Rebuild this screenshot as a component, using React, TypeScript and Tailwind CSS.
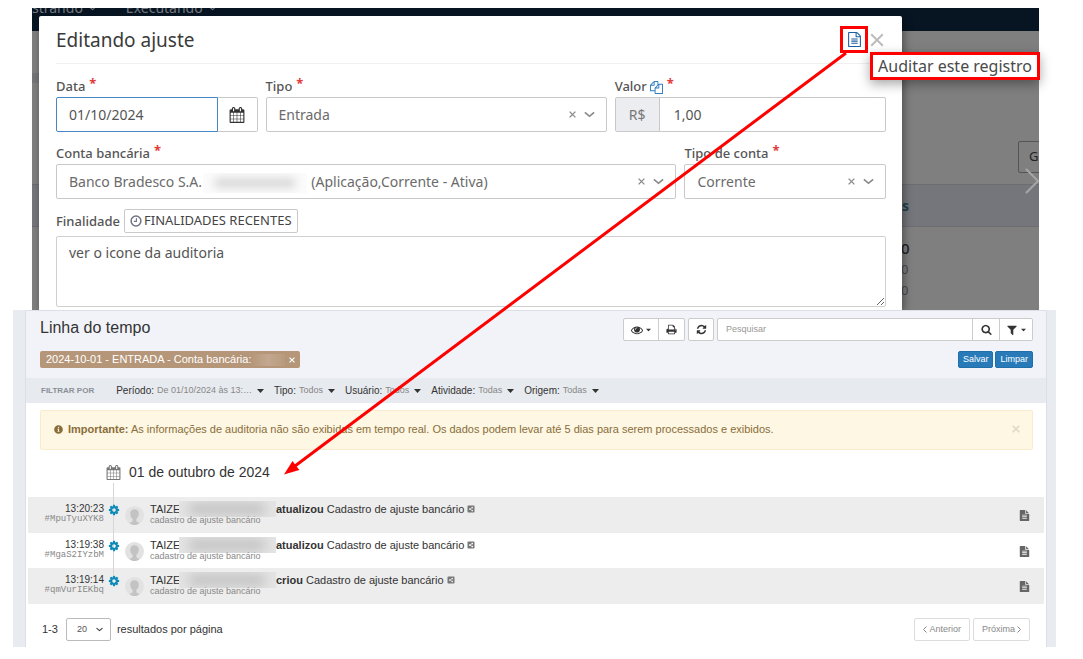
import React from "react";
import { FaInfoCircle, FaShareAltSquare } from "react-icons/fa";

const SANS = "font-['Liberation_Sans',Arial,sans-serif]";
const NOTO = "font-['Noto_Sans',sans-serif]";

const PATHS = {
  calendar:
    "M192 1664h288v-288h-288v288zm352 0h320v-288h-320v288zm-352-352h288v-320h-288v320zm352 0h320v-320h-320v320zm-352-384h288v-288h-288v288zm736 736h320v-288h-320v288zm-384-736h320v-288h-320v288zm768 736h288v-288h-288v288zm-384-352h320v-320h-320v320zm-352-864v-288q0-13-9.500-22.500t-22.500-9.500h-64q-13 0-22.500 9.500t-9.500 22.500v288q0 13 9.500 22.500t22.500 9.500h64q13 0 22.500-9.500t9.500-22.500zm736 864h288v-320h-288v320zm-384-384h320v-288h-320v288zm384 0h288v-288h-288v288zm32-480v-288q0-13-9.500-22.500t-22.500-9.500h-64q-13 0-22.500 9.500t-9.500 22.500v288q0 13 9.500 22.500t22.500 9.500h64q13 0 22.500-9.500t9.500-22.500zm384-64v1280q0 52-38 90t-90 38h-1408q-52 0-90-38t-38-90v-1280q0-52 38-90t90-38h128v-96q0-66 47-113t113-47h64q66 0 113 47t47 113v96h384v-96q0-66 47-113t113-47h64q66 0 113 47t47 113v96h128q52 0 90 38t38 90z",
  fileOutline:
    "M1596 380q28 28 48 76t20 88v1152q0 40-28 68t-68 28h-1344q-40 0-68-28t-28-68v-1600q0-40 28-68t68-28h896q40 0 88 20t76 48zm-444-244v376h376q-10-29-22-41l-313-313q-12-12-41-22zm384 1528v-1024h-416q-40 0-68-28t-28-68v-416h-768v1536h1280zm-1024-864q0-14 9-23t23-9h704q14 0 23 9t9 23v64q0 14-9 23t-23 9h-704q-14 0-23-9t-9-23v-64zm736 224q14 0 23 9t9 23v64q0 14-9 23t-23 9h-704q-14 0-23-9t-9-23v-64q0-14 9-23t23-9h704zm0 256q14 0 23 9t9 23v64q0 14-9 23t-23 9h-704q-14 0-23-9t-9-23v-64q0-14 9-23t23-9h704z",
  file: "M1596 476q14 14 28 36h-472v-472q22 14 36 28zm-476 164h544v1056q0 40-28 68t-68 28h-1344q-40 0-68-28t-28-68v-1600q0-40 28-68t68-28h800v544q0 40 28 68t68 28zm160 736v-64q0-14-9-23t-23-9h-704q-14 0-23 9t-9 23v64q0 14 9 23t23 9h704q14 0 23-9t9-23zm0-256v-64q0-14-9-23t-23-9h-704q-14 0-23 9t-9 23v64q0 14 9 23t23 9h704q14 0 23-9t9-23zm0-256v-64q0-14-9-23t-23-9h-704q-14 0-23 9t-9 23v64q0 14 9 23t23 9h704q14 0 23-9t9-23z",
  search:
    "M1216 832q0-185-131.500-316.500t-316.500-131.500-316.500 131.500-131.500 316.500 131.500 316.500 316.500 131.500 316.500-131.500 131.500-316.500zm512 832q0 52-38 90t-90 38q-54 0-90-38l-343-342q-179 124-399 124-143 0-273.500-55.500t-225-150-150-225-55.500-273.500 55.500-273.500 150-225 225-150 273.500-55.500 273.500 55.500 225 150 150 225 55.500 273.500q0 220-124 399l343 343q37 37 37 90z",
  refresh:
    "M1639 1056q0 5-1 7-64 268-268 434.500t-478 166.500q-146 0-282.500-55t-243.500-157l-129 129q-19 19-45 19t-45-19-19-45v-448q0-26 19-45t45-19h448q26 0 45 19t19 45-19 45l-137 137q71 66 161 102t187 36q134 0 250-65t186-179q11-17 53-117 8-23 30-23h192q13 0 22.500 9.500t9.500 22.500zm25-800v448q0 26-19 45t-45 19h-448q-26 0-45-19t-19-45 19-45l138-138q-148-137-349-137-134 0-250 65t-186 179q-11 17-53 117-8 23-30 23h-199q-13 0-22.500-9.500t-9.500-22.500v-7q65-268 270-434.500t480-166.500q146 0 284 55.500t245 156.500l130-129q19-19 45-19t45 19 19 45z",
  print:
    "M448 1536h896v-256h-896v256zm0-640h896v-384h-160q-40 0-68-28t-28-68v-160h-640v640zm1152 64q0-26-19-45t-45-19-45 19-19 45 19 45 45 19 45-19 19-45zm128 0v416q0 13-9.500 22.500t-22.500 9.500h-224v160q0 40-28 68t-68 28h-960q-40 0-68-28t-28-68v-160h-224q-13 0-22.500-9.500t-9.500-22.500v-416q0-79 56.500-135.500t135.500-56.500h64v-544q0-40 28-68t68-28h672q40 0 88 20t76 48l152 152q28 28 48 76t20 88v256h64q79 0 135.500 56.500t56.500 135.500z",
  filter:
    "M1595 295q17 41-14 70l-493 493v742q0 42-39 59-13 5-25 5-27 0-45-19l-256-256q-19-19-19-45v-486l-493-493q-31-29-14-70 17-39 59-39h1280q42 0 59 39z",
  eye: "M1664 960q-152-236-381-353 61 104 61 225 0 185-131.500 316.500t-316.500 131.500-316.500-131.500-131.500-316.500q0-121 61-225-229 117-381 353 133 205 333.500 326.500t434.500 121.500 434.500-121.500 333.500-326.500zm-720-384q0-20-14-34t-34-14q-125 0-214.500 89.500t-89.500 214.500q0 20 14 34t34 14 34-14 14-34q0-86 61-147t147-61q20 0 34-14t14-34zm848 384q0 34-20 69-140 230-376.500 368.500t-499.500 138.500-499.500-139-376.500-368q-20-35-20-69t20-69q140-229 376.500-368t499.500-139 499.500 139 376.500 368q20 35 20 69z",
  copy: "M1696 384q40 0 68 28t28 68v1216q0 40-28 68t-68 28h-960q-40 0-68-28t-28-68v-288h-544q-40 0-68-28t-28-68v-672q0-40 20-88t48-76l408-408q28-28 76-48t88-20h416q40 0 68 28t28 68v328q68-40 128-40h416zm-544 213l-299 299h299v-299zm-640-384l-299 299h299v-299zm196 647l316-316v-416h-384v416q0 40-28 68t-68 28h-416v640h512v-256q0-40 20-88t48-76zm956 804v-1152h-384v416q0 40-28 68t-68 28h-416v640h896z",
  cog: "M1152 896q0-106-75-181t-181-75-181 75-75 181 75 181 181 75 181-75 75-181zm512-109v222q0 12-8 23t-20 13l-185 28q-19 54-39 91 35 50 107 138 10 12 10 25t-9 23q-27 37-99 108t-94 71q-12 0-26-9l-138-108q-44 23-91 38-16 136-29 186-7 28-36 28h-222q-14 0-24.500-8.500t-11.500-21.500l-28-184q-49-16-90-37l-141 107q-10 9-25 9-14 0-25-11-126-114-165-168-7-10-7-23 0-12 8-23 15-21 51-66.500t54-70.500q-27-50-41-99l-183-27q-13-2-21-12.500t-8-23.500v-222q0-12 8-23t19-13l186-28q14-46 39-92-40-57-107-138-10-12-10-24 0-10 9-23 26-36 98.500-107.500t94.500-71.500q13 0 26 10l138 107q44-23 91-38 16-136 29-186 7-28 36-28h222q14 0 24.500 8.500t11.500 21.500l28 184q49 16 90 37l142-107q9-9 24-9 13 0 25 10 129 119 165 170 7 8 7 22 0 12-8 23-15 21-51 66.500t-54 70.500q26 50 41 98l183 28q13 2 21 12.500t8 23.500z",
};

function Icon({ name, className }: { name: keyof typeof PATHS; className: string }) {
  return (
    <svg viewBox="0 0 1792 1792" className={`shrink-0 fill-current ${className}`} aria-hidden="true">
      <path d={PATHS[name]} />
    </svg>
  );
}

function Clock({ className }: { className: string }) {
  return (
    <svg viewBox="0 0 12 12" className={className} fill="none" stroke="currentColor" aria-hidden="true">
      <circle cx="6" cy="6" r="4.900" strokeWidth="1.500" />
      <path d="M6.400 3v3.400H3.900" strokeWidth="1.100" />
    </svg>
  );
}

function Chevron({ className }: { className: string }) {
  return (
    <svg viewBox="0 0 10 6" className={className} fill="none" stroke="currentColor" aria-hidden="true">
      <path d="M.8 1L5 4.600 9.200 1" strokeWidth="1.500" />
    </svg>
  );
}

function Cross({ className, weight = 1.5 }: { className: string; weight?: number }) {
  return (
    <svg viewBox="0 0 8 8" className={className} fill="none" stroke="currentColor" aria-hidden="true">
      <path d="M.7.7l6.600 6.600M7.300.7L.7 7.300" strokeWidth={weight} />
    </svg>
  );
}

function Caret() {
  return (
    <svg viewBox="0 0 7 4" className="h-1 w-[7px] shrink-0 fill-current" aria-hidden="true">
      <path d="M0 0h7L3.500 4z" />
    </svg>
  );
}

function FieldLabel({ id, children }: { id: string; children: React.ReactNode }) {
  return (
    <label htmlFor={id} className="flex h-5 items-center gap-1 text-[13px] font-medium text-[#555]">
      {children}
      <span className="mb-2 text-[13px] font-bold leading-none text-[#e23b3b]">*</span>
    </label>
  );
}

function SelectBox({ id, value, children }: { id: string; value: string; children?: React.ReactNode }) {
  return (
    <div className="relative flex h-[35px] items-center rounded-xs border border-[#c9c9c9] bg-white pl-3 pr-[11px] text-[#6b6b6b]">
      <select id={id} className="h-full min-w-0 flex-1 appearance-none bg-transparent text-sm outline-none">
        <option>{value}</option>
      </select>
      {children}
      <button type="button" aria-label="Limpar campo" className="mr-2 text-[#888]">
        <Cross className="h-[7px] w-[7px]" />
      </button>
      <Chevron className="h-[7px] w-[11px] text-[#888]" />
    </div>
  );
}

function Backdrop() {
  return (
    <div className="absolute inset-0 overflow-hidden bg-[#7f7f7f]">
      <div className="h-[23px] overflow-hidden bg-[#071523]">
        <div className="-mt-2 flex gap-[30px] text-sm leading-4 text-[#777b80]">
          <span className="flex items-center gap-1.5">strando <Chevron className="h-[5px] w-[7px]" /></span>
          <span className="flex items-center gap-1.5">Executando <Chevron className="h-[5px] w-[7px]" /></span>
        </div>
      </div>
      <div className="mt-[42px] h-2.5 w-2 bg-[#747578]" />
      <div className="mt-[58px] flex justify-end">
        <div className="-mr-1 h-8 w-[25px] rounded-xs border border-[#555] pl-2.5 text-[13px] leading-[28px] text-[#222]">G</div>
      </div>
      <div className="mt-[11px] flex h-[43px] items-center border-y border-[#6d6d70] bg-[#75767b]">
        <div className="ml-auto w-[137px] text-sm font-bold text-[#23414f]">s</div>
      </div>
      <div className="ml-auto w-[138px] pt-2.5 text-[15px] leading-[22px] text-[#222]">
        <div className="font-medium">0</div>
        <div className="text-[13px] leading-[21px] text-[#4a4a4a]">0</div>
        <div className="text-[13px] leading-[21px] text-[#4a4a4a]">0</div>
      </div>
      <svg viewBox="0 0 14 26" className="absolute right-0 top-40 h-[26px] w-3.5" fill="none" stroke="#a5a5a5" strokeWidth="2.200" aria-hidden="true">
        <path d="M1 1l12 12L1 25" />
      </svg>
    </div>
  );
}

function EditModal() {
  return (
    <section className={`relative ml-8 mr-11 ${NOTO}`}>
      <Backdrop />
      <div className="relative flow-root">
        <form className="ml-[7px] mr-[137px] mt-2 rounded-t-xs bg-white pb-[3px] pl-[17px] pr-4 shadow-[2px_2px_8px_rgba(0,0,0,0.4)]">
          <header className="flex h-12 items-center border-b border-[#f0f0f0] pr-0.5">
            <h1 className="text-[19px] leading-6 text-[#3a3a3a]">Editando ajuste</h1>
            <button type="button" aria-label="Auditar este registro" className="ml-auto flex h-[27px] w-7 items-center justify-center border-3 border-[#fe0000] text-[#1f5f9f]">
              <Icon name="fileOutline" className="h-[15px] w-[15px]" />
            </button>
            <button type="button" aria-label="Fechar" className="ml-0.5 text-[#bbb]">
              <Cross className="h-3.5 w-3.5" weight={1.1} />
            </button>
          </header>
          <div className="mt-[13px] grid grid-cols-12 gap-x-2 gap-y-3">
            <div className="col-span-3">
              <FieldLabel id="data">Data</FieldLabel>
              <div className="flex h-[35px]">
                <input id="data" defaultValue="01/10/2024" className="w-0 min-w-0 flex-1 rounded-l-xs border border-[#4a86c5] px-3 text-sm text-[#555] outline-none" />
                <button type="button" aria-label="Abrir calendário" className="flex w-10 items-center justify-center rounded-r-xs border border-l-0 border-[#c9c9c9] text-[#333]">
                  <Icon name="calendar" className="h-4 w-4" />
                </button>
              </div>
            </div>
            <div className="col-span-5">
              <FieldLabel id="tipo">Tipo</FieldLabel>
              <SelectBox id="tipo" value="Entrada" />
            </div>
            <div className="col-span-4">
              <FieldLabel id="valor">
                Valor <Icon name="copy" className="-ml-px h-[13px] w-[13px] text-[#2d7cc0]" />
              </FieldLabel>
              <div className="flex h-[35px] rounded-xs border border-[#c9c9c9]">
                <span className="flex w-11 items-center justify-center border-r border-[#c9c9c9] bg-[#ebedf1] text-sm text-[#777]">R$</span>
                <input id="valor" defaultValue="1,00" className="w-0 min-w-0 flex-1 px-3.5 text-sm text-[#555] outline-none" />
              </div>
            </div>
            <div className="col-span-9">
              <FieldLabel id="conta">Conta bancária</FieldLabel>
              <SelectBox id="conta" value={"Banco Bradesco S.A." + "\u00a0".repeat(30) + "(Aplicação,Corrente - Ativa)"}>
                <span className="absolute left-[146px] top-2 flex h-5 w-[104px] items-center overflow-hidden bg-[#fbfbfb]">
                  <span className="ml-3 h-2 w-20 bg-[#d0d0d0] blur-[5px]" />
                </span>
              </SelectBox>
            </div>
            <div className="col-span-3">
              <FieldLabel id="tipo-conta">Tipo de conta</FieldLabel>
              <SelectBox id="tipo-conta" value="Corrente" />
            </div>
          </div>
          <div className="mt-2.5 flex items-center gap-1">
            <label htmlFor="finalidade" className="pt-0.5 text-[13px] font-medium text-[#555]">Finalidade</label>
            <button type="button" className="flex h-6 items-center gap-0.5 rounded-xs border border-[#c9c9c9] px-[5px] text-[13px] text-[#444]">
              <Clock className="h-3 w-3 text-[#6d7484]" /> FINALIDADES RECENTES
            </button>
          </div>
          <textarea id="finalidade" defaultValue="ver o icone da auditoria" className="mt-[3px] block h-[71px] w-full resize-y rounded-xs border border-[#d0d0d0] px-3 py-1.5 text-sm text-[#555] outline-none" />
        </form>
      </div>
      <div role="tooltip" className="absolute -right-px top-11 flex h-7 items-center border-3 border-[#fe0000] bg-white px-[5px] text-base text-[#4a4a4a] shadow-[0_4px_12px_rgba(0,0,0,0.35)]">
        Auditar este registro
      </div>
    </section>
  );
}

const FILTERS = [
  { label: "Período:", value: "De 01/10/2024 às 13:…" },
  { label: "Tipo:", value: "Todos" },
  { label: "Usuário:", value: "Todos" },
  { label: "Atividade:", value: "Todas" },
  { label: "Origem:", value: "Todas" },
];

const EVENTS = [
  { time: "13:20:23", id: "#MpuTyuXYK8", action: "atualizou" },
  { time: "13:19:38", id: "#MgaS2IYzbM", action: "atualizou" },
  { time: "13:19:14", id: "#qmVurIEKbq", action: "criou" },
];

function Avatar() {
  return (
    <svg viewBox="0 0 19 19" className="h-[19px] w-[19px] shrink-0" aria-hidden="true">
      <circle cx="9.500" cy="9.500" r="9.500" fill="#e2e2e2" />
      <path d="M9.500 3.300c-2.700 0-4.300 1.800-4.300 4.300 0 2.300 1 4.400 2.500 5.400l-.2 2.400-3 1.500c1.400 1.300 3 2.100 5 2.100s3.600-.8 5-2.100l-3-1.500-.2-2.400c1.500-1 2.500-3.100 2.500-5.400 0-2.500-1.600-4.300-4.300-4.300z" fill="#c3c3c3" />
    </svg>
  );
}

function TimelinePage() {
  const tool = "flex items-center justify-center gap-0.5 border-[#ccc] bg-white";
  const primary = "rounded-xs border border-[#206fa8] bg-[#287bb8] text-[9px] text-white";
  const pager = "flex h-[23px] items-center gap-0.5 rounded-xs border border-[#ddd] px-2 text-[9px] text-[#888]";
  return (
    <section className={`relative ml-[13px] mr-[27px] bg-[#e8ebf0] pl-3 pr-[9px] ${SANS} text-[11px] text-[#333]`}>
      <div className="border-x border-t border-[#dcdfe6] bg-white">
        <header className="bg-[#f2f3f8] pb-2.5 pl-3.5 pr-[13px] pt-[7px]">
          <div className="flex items-start">
            <h2 className="mr-auto text-base leading-5">Linha do tempo</h2>
            <div className="flex h-[23px] rounded-xs border border-[#ccc]">
              <button type="button" aria-label="Visualização" className={`${tool} w-[35px] rounded-l-xs border-r`}>
                <Icon name="eye" className="h-3 w-3" /><span className="scale-75"><Caret /></span>
              </button>
              <button type="button" aria-label="Imprimir" className={`${tool} w-[25px] rounded-r-xs`}>
                <Icon name="print" className="h-[11px] w-[11px]" />
              </button>
            </div>
            <button type="button" aria-label="Atualizar" className={`${tool} ml-[3px] h-[23px] w-[26px] rounded-xs border`}>
              <Icon name="refresh" className="h-[11px] w-[11px]" />
            </button>
            <div className="ml-[3px] flex h-[23px] w-[316px] rounded-xs border border-[#ccc] bg-white">
              <input aria-label="Pesquisar" placeholder="Pesquisar" className="w-0 min-w-0 flex-1 pl-2 text-[9px] outline-none placeholder:text-[#999]" />
              <button type="button" aria-label="Buscar" className={`${tool} w-[27px] border-l`}>
                <Icon name="search" className="h-[11px] w-[11px]" />
              </button>
              <button type="button" aria-label="Filtros" className={`${tool} w-[33px] rounded-r-xs border-l`}>
                <Icon name="filter" className="h-3 w-3" /><span className="scale-75"><Caret /></span>
              </button>
            </div>
          </div>
          <div className="mt-2.5 flex h-[17px]">
            <div className="mr-auto flex w-[260px] items-center rounded-xs bg-[#b59679] pl-1.5 pr-[5px] text-[11px] text-white">
              <span className="whitespace-nowrap">2024-10-01 - ENTRADA - Conta bancária:</span>
              <span className="h-3 min-w-0 flex-1 bg-linear-to-r from-[#b59679] via-[#c3a88f] to-[#b89a7e]" />
              <button type="button" aria-label="Remover filtro" className="ml-1"><Cross className="h-1.5 w-1.5" /></button>
            </div>
            <button type="button" className={`${primary} px-1`}>Salvar</button>
            <button type="button" className={`${primary} ml-0.5 px-1`}>Limpar</button>
          </div>
        </header>
        <nav className="flex h-[25px] items-center gap-2.5 bg-[#e7eaee] pl-[15px]">
          <span className="mr-3 text-[8px] font-bold text-[#8a8f98]">FILTRAR POR</span>
          {FILTERS.map((f) => (
            <button key={f.label} type="button" aria-haspopup="listbox" className="flex items-center gap-[3px] text-[10px]">
              {f.label}
              <span className="mr-0.5 text-[9px] text-[#888]">{f.value}</span>
              <Caret />
            </button>
          ))}
        </nav>
        <div role="alert" className="ml-3.5 mr-[13px] mt-[7px] flex h-10 items-center rounded-xs border border-[#faebcc] bg-[#fdf7e3] pb-0.5 pl-[13px] pr-3 text-[#8a6d3b]">
          <FaInfoCircle className="mr-[5px] h-[9px] w-[9px]" />
          <p><strong>Importante:</strong> As informações de auditoria não são exibidas em tempo real. Os dados podem levar até 5 dias para serem processados e exibidos.</p>
          <button type="button" aria-label="Fechar aviso" className="ml-auto text-[#dfd8c2]"><Cross className="h-2 w-2" /></button>
        </div>
        <h3 className="ml-20 mt-3 flex h-5 items-center gap-2 text-sm">
          <Icon name="calendar" className="h-[15px] w-[15px] text-[#777]" /> 01 de outubro de 2024
        </h3>
        <ul className="relative mx-0.5 mt-[15px]">
          {EVENTS.map((e) => (
            <li key={e.time} className="flex h-9 items-start odd:bg-[#ededed] even:h-[35px]">
              <div className="w-[76px] pt-[7px] text-right">
                <div className="text-[10px] leading-[10px]">{e.time}</div>
                <div className="font-['Liberation_Mono',monospace] text-[9px] leading-[10px] text-[#888]">{e.id}</div>
              </div>
              <Icon name="cog" className="relative z-10 ml-1 mt-[7px] h-3 w-3 text-[#0c8bb8]" />
              <div className="ml-[5px] mt-[9px]"><Avatar /></div>
              <div className="ml-1.5 pt-1.5">
                <div className="flex items-center leading-3">
                  <span className="w-[29px]">TAIZE</span>
                  <span className="-my-1 flex h-4 w-[97px] items-center overflow-hidden bg-[#e4e4e4]">
                    <span className="ml-2.5 h-2.5 w-[76px] bg-[#bdbdbd] blur-[6px]" />
                  </span>
                  <strong>{e.action}</strong>&nbsp;Cadastro de ajuste bancário
                  <FaShareAltSquare className="ml-[3px] h-2 w-2 text-[#777]" />
                </div>
                <div className="text-[9px] leading-[11px] text-[#888]">cadastro de ajuste bancário</div>
              </div>
              <button type="button" aria-label="Ver registro" className="ml-auto mr-[14px] mt-[13px] text-[#666]">
                <Icon name="file" className="h-[11px] w-[11px]" />
              </button>
            </li>
          ))}
          <li aria-hidden="true" className="absolute -top-3.5 left-[85px] h-[92px] w-px bg-[#d6d6d6]" />
        </ul>
        <footer className="flex h-[43px] items-center pb-1.5 pl-4 pr-4 pt-3.5">
          <span>1-3</span>
          <div className="relative ml-2 flex items-center">
            <select aria-label="Resultados por página" className="h-[23px] w-[45px] appearance-none rounded-xs border border-[#bbb] bg-white pl-2.5 text-[9px] text-[#555] outline-none">
              <option>20</option>
            </select>
            <Chevron className="pointer-events-none absolute right-2 h-[5px] w-[7px]" />
          </div>
          <span className="ml-1.5">resultados por página</span>
          <button type="button" className={`${pager} ml-auto`}>
            <svg viewBox="0 0 4 7" className="h-[7px] w-1" fill="none" stroke="currentColor" aria-hidden="true"><path d="M3.500.5l-3 3 3 3" /></svg>
            Anterior
          </button>
          <button type="button" className={`${pager} ml-[3px]`}>
            Próxima
            <svg viewBox="0 0 4 7" className="h-[7px] w-1" fill="none" stroke="currentColor" aria-hidden="true"><path d="M.5.5l3 3-3 3" /></svg>
          </button>
        </footer>
      </div>
    </section>
  );
}

export default function App() {
  return (
    <main className="relative bg-white pb-3 pt-2">
      <EditModal />
      <TimelinePage />
      <svg viewBox="0 0 566 424" className="pointer-events-none absolute left-[283px] top-[52px] h-[424px] w-[566px]" aria-hidden="true">
        <path d="M563 1L12 414" stroke="#fe0000" strokeWidth="3" />
        <path d="M1 422.500l8.500-13.500 6.800 9z" fill="#fe0000" />
      </svg>
    </main>
  );
}
